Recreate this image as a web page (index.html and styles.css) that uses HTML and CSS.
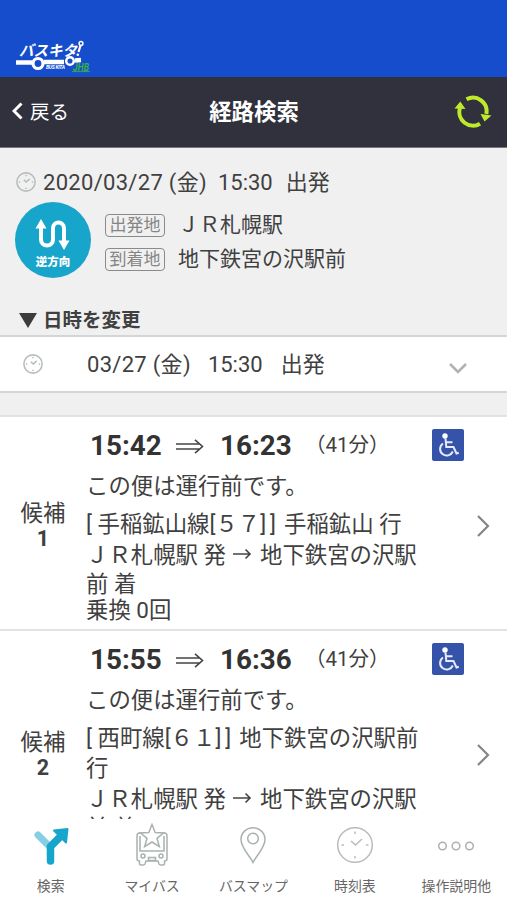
FILE: index.html
```
<!DOCTYPE html>
<html lang="ja">
<head>
    <meta charset="UTF-8">
    <meta name="viewport" content="width=device-width, initial-scale=1.0">
    <title>経路検索</title>
    <link rel="stylesheet" href="styles.css">
</head>
<body>
    <!-- 共通アイコン -->
    <svg class="defs" width="0" height="0">
        <symbol id="clock" viewBox="0 0 38 38">
            <circle cx="19" cy="19" r="17.3"/>
            <path d="M15 15l4.500 4L26 13M19 5.500v2.500M19 30v2.500M5.500 19H8M30 19h2.500"/>
        </symbol>
        <symbol id="wheelchair" viewBox="0 0 32 32">
            <rect width="32" height="32" rx="2" fill="#3553a8"/>
            <circle cx="13" cy="7" r="2.700" fill="#fff"/>
            <path d="M13.500 9.500l.8 8.500h7.200l3 6.500 2.300-.8M14 13.200h6.500M11 14.500a6.600 6.600 0 1 0 9.800 8" fill="none" stroke="#e6eafa" stroke-width="2"/>
        </symbol>
    </svg>

    <div class="app">
        <header class="brand">
            <svg class="logo" width="78" height="36" viewBox="0 0 78 36">
                <path d="M1 22.500H17M29 22H49M60 20.500L66 20" stroke="#fff" stroke-width="4.500" fill="none"/>
                <circle cx="23" cy="23.500" r="5" fill="none" stroke="#fff" stroke-width="3.200"/>
                <circle cx="55" cy="21" r="3.800" fill="none" stroke="#fff" stroke-width="2.500"/>
                <text class="logo-name" x="4" y="15.500" textLength="58" lengthAdjust="spacingAndGlyphs">バスキタ</text>
                <path d="M65.500 5.500L63.500 12" stroke="#fff" stroke-width="2.200"/>
                <circle cx="66" cy="3.500" r="1.900" fill="none" stroke="#fff" stroke-width="1.500"/>
                <circle cx="62.800" cy="14.800" r="1.300" fill="#fff"/>
                <text class="logo-sub" x="31" y="28.500" textLength="19">BUS KITA</text>
                <text class="logo-jhb" x="58" y="31" textLength="16" lengthAdjust="spacingAndGlyphs">JHB</text>
                <path d="M57 31.600H75" stroke="#35a35a"/>
            </svg>
        </header>

        <div class="navbar">
            <a class="back">
                <svg width="11" height="18" viewBox="0 0 11 18"><path d="M9.500 1.500L2 9l7.500 7.500" fill="none" stroke="#fff" stroke-width="3"/></svg>
                <span>戻る</span>
            </a>
            <h1>経路検索</h1>
            <svg class="reload" width="38" height="34" viewBox="0 0 38 34">
                <path d="M12.500 4.300A13.600 13.600 0 0 1 32.300 19M26 28.700A13.600 13.600 0 0 1 6 13" fill="none" stroke="#bfe92b" stroke-width="4"/>
                <path d="M26.500 19L37.500 20.500 30.500 26.500zM.5 13.500L6.300 6.500 11.500 14z" fill="#bfe92b"/>
            </svg>
        </div>

        <section class="summary">
            <div class="when">
                <svg class="clock" width="20" height="20"><use href="#clock"/></svg>
                <p><span class="date">2020/03/27 (金)</span><span class="hour">15:30</span><span>出発</span></p>
            </div>
            <div class="places">
                <div class="reverse">
                    <svg width="36" height="33" viewBox="0 0 36 33"><path d="M6 8V21.500a6 6 0 0 0 12 0V10a5.500 5.500 0 0 1 11 0V24" fill="none" stroke="#fff" stroke-width="4"/><path d="M6 1l5.500 9.500H.5zM29 32l-5.500-9.500h11z" fill="#fff"/></svg>
                    <span>逆方向</span>
                </div>
                <dl>
                    <dt>出発地</dt><dd>ＪＲ札幌駅</dd>
                    <dt>到着地</dt><dd>地下鉄宮の沢駅前</dd>
                </dl>
            </div>
            <h2><i class="triangle"></i>日時を変更</h2>
        </section>

        <div class="picker">
            <svg class="clock" width="20" height="20"><use href="#clock"/></svg>
            <p><span class="date">03/27 (金)</span><span class="hour">15:30</span><span>出発</span></p>
            <svg class="down" width="18" height="11" viewBox="0 0 18 11"><path d="M1 1l8 8 8-8" fill="none" stroke="#aeb2b2" stroke-width="2.500"/></svg>
        </div>

        <main class="results">
            <article class="result">
                <div class="rank">候補<b>1</b></div>
                <div class="route">
                    <div class="times">
                        <b>15:42</b>
                        <svg class="arrow" width="28" height="15" viewBox="0 0 28 15"><path d="M0 5H24M0 10H24M19 .8L26.500 7.500 19 14.200" fill="none" stroke="#444" stroke-width="1.600"/></svg>
                        <b>16:23</b><span class="mins">（41分）</span>
                        <svg class="access" width="32" height="32"><use href="#wheelchair"/></svg>
                    </div>
                    <p class="status">この便は運行前です。</p>
                    <p class="line"><span class="bus">[ 手稲鉱山線[５７<i>]]</i></span>手稲鉱山 行</p>
                    <p class="stops">ＪＲ札幌駅 発 <svg class="to" width="19" height="12" viewBox="0 0 19 12"><path d="M0 6H17M12.500 1.500L17 6l-4.500 4.500" fill="none" stroke="#444" stroke-width="1.600"/></svg> 地下鉄宮の沢駅<br>前 着</p>
                    <p class="change">乗換 0回</p>
                </div>
                <svg class="go" width="13" height="22" viewBox="0 0 13 22"><path d="M1 1l10 10L1 21" fill="none" stroke="#858585" stroke-width="2.200"/></svg>
            </article>

            <article class="result">
                <div class="rank">候補<b>2</b></div>
                <div class="route">
                    <div class="times">
                        <b>15:55</b>
                        <svg class="arrow" width="28" height="15" viewBox="0 0 28 15"><path d="M0 5H24M0 10H24M19 .8L26.500 7.500 19 14.200" fill="none" stroke="#444" stroke-width="1.600"/></svg>
                        <b>16:36</b><span class="mins">（41分）</span>
                        <svg class="access" width="32" height="32"><use href="#wheelchair"/></svg>
                    </div>
                    <p class="status">この便は運行前です。</p>
                    <p class="line"><span class="bus">[ 西町線[６１<i>]]</i></span>地下鉄宮の沢駅前<br>行</p>
                    <p class="stops">ＪＲ札幌駅 発 <svg class="to" width="19" height="12" viewBox="0 0 19 12"><path d="M0 6H17M12.500 1.500L17 6l-4.500 4.500" fill="none" stroke="#444" stroke-width="1.600"/></svg> 地下鉄宮の沢駅<br>前 着</p>
                    <p class="change">乗換 0回</p>
                </div>
                <svg class="go" width="13" height="22" viewBox="0 0 13 22"><path d="M1 1l10 10L1 21" fill="none" stroke="#858585" stroke-width="2.200"/></svg>
            </article>
        </main>

        <nav class="tabs">
            <a>
                <svg width="36" height="44" viewBox="0 0 36 44">
                    <path d="M5 12L17 24" stroke="#86cfe2" stroke-width="7" stroke-linecap="round"/>
                    <path d="M17.500 38V23.500L28 13" fill="none" stroke="#18a5cb" stroke-width="7.500" stroke-linecap="round" stroke-linejoin="round"/>
                    <path d="M21 7.500L34.500 6 33 19.500z" fill="#18a5cb" stroke="#18a5cb" stroke-width="2" stroke-linejoin="round"/>
                </svg>
                <span>検索</span>
            </a>
            <a>
                <svg class="outline" width="36" height="44" viewBox="0 0 36 44">
                    <path d="M8 10H5.500Q3 10 3 13V36q0 2 2.500 2v3q0 1 1.500 1h2.500q1 0 1.500-1l1-3H24l1 3q.5 1 1.500 1H29q1.500 0 1.500-1v-3q2.500 0 2.500-2V13q0-3-2.500-3H28M6 13V28H30V13"/>
                    <path d="M18 1.500l3.200 8 8.300.5-6.500 5.300 2.300 8.300L18 19l-7.300 4.600 2.300-8.300L6.500 10l8.300-.5z" fill="#fff"/>
                    <circle cx="9" cy="33" r="2"/><circle cx="27" cy="33" r="2"/><path d="M14.500 34.500h7v3h-7z"/>
                </svg>
                <span>マイバス</span>
            </a>
            <a>
                <svg class="outline" width="36" height="44" viewBox="0 0 36 44">
                    <path d="M18 39.500C15 33 6 25 6 16.500a12 11.800 0 0 1 24 0C30 25 21 33 18 39.500z"/>
                    <circle cx="18" cy="15.500" r="5.300"/>
                </svg>
                <span>バスマップ</span>
            </a>
            <a>
                <svg class="clock big" width="38" height="44"><use href="#clock"/></svg>
                <span>時刻表</span>
            </a>
            <a>
                <svg class="outline" width="38" height="44" viewBox="0 0 38 44"><circle cx="5.500" cy="23" r="3.800"/><circle cx="19" cy="23" r="3.800"/><circle cx="32.500" cy="23" r="3.800"/></svg>
                <span>操作説明他</span>
            </a>
        </nav>
    </div>
</body>
</html>
```
FILE: styles.css
```
* {
    box-sizing: border-box;
}
body {
    margin: 0;
    font-family: Roboto, "Noto Sans CJK JP", sans-serif;
    font-size: 22.4px;
    color: #404040;
    background: #f0f0f0;
}
h1, h2, p, dl, dd {
    margin: 0;
}
svg {
    display: block;
    flex: none;
}
.defs {
    position: absolute;
}
.app {
    height: 900px;
    display: flex;
    flex-direction: column;
    overflow: hidden;
}

/* ヘッダー */
.brand {
    flex: none;
    height: 77px;
    padding: 40px 0 0 15px;
    background: #164dcc;
}
.logo text {
    fill: #fff;
    font-weight: bold;
    font-style: italic;
}
.logo .logo-name {
    font-size: 15px;
}
.logo .logo-sub {
    font-size: 5px;
}
.logo .logo-jhb {
    font-size: 10px;
    fill: #35b04a;
}
.navbar {
    flex: none;
    height: 71px;
    padding: 0 15px 2px 12px;
    display: grid;
    grid-template-columns: 1fr auto 1fr;
    align-items: center;
    background: #30313d;
    border-bottom: 1px solid #77777d;
    color: #fff;
}
.back {
    display: flex;
    align-items: center;
    gap: 7px;
    font-size: 19.5px;
    line-height: 26px;
}
.back span {
    padding-top: 3px;
}
.navbar h1 {
    padding: 1px 0 0 4px;
    font-size: 22.4px;
    line-height: 30px;
}
.reload {
    justify-self: end;
    margin-top: 2px;
}

/* 検索条件 */
.summary {
    flex: none;
    height: 187px;
    padding: 16px 15px 0;
}
.when {
    display: flex;
    align-items: center;
    height: 36px;
    font-size: 22px;
    line-height: 34px;
}
.when p {
    padding-top: 1px;
}
.clock {
    fill: none;
    stroke: #b7bdbd;
    stroke-width: 3;
}
.when .clock {
    margin: 0 7px 0 1px;
}
.date {
    letter-spacing: 0.3px;
}
.when .hour {
    margin: 0 13px 0 11px;
}
.places {
    display: flex;
    height: 80px;
    padding-top: 2px;
}
.reverse {
    width: 76px;
    height: 76px;
    border-radius: 50%;
    background: #18a5cb;
    color: #fff;
    font-size: 11.5px;
    font-weight: 900;
    line-height: 14px;
    display: flex;
    flex-direction: column;
    align-items: center;
    gap: 4px;
    padding-top: 16px;
}
.places dl {
    margin-left: 14px;
    padding-top: 7px;
    display: grid;
    grid-template-columns: 60px auto;
    grid-auto-rows: 33.5px;
    column-gap: 13px;
    align-items: center;
    font-size: 21px;
    line-height: 33px;
}
.places dt {
    height: 23px;
    border: 1px solid #8a8a8a;
    border-radius: 4px;
    color: #858585;
    font-size: 17px;
    line-height: 20px;
    text-align: center;
}
.summary h2 {
    display: flex;
    align-items: center;
    gap: 6px;
    margin-top: 26px;
    padding-left: 4px;
    font-size: 19.5px;
    line-height: 30px;
}
.triangle {
    margin-bottom: 2px;
    border: 9px solid transparent;
    border-top: 15px solid #3c3c3c;
    border-bottom: 0;
}
.picker {
    flex: none;
    height: 58px;
    padding: 0 40px 0 23px;
    display: flex;
    align-items: center;
    background: #fff;
    border-top: 2px solid #d5d5d5;
    border-bottom: 2px solid #d5d5d5;
    font-size: 22px;
    line-height: 34px;
}
.picker p {
    padding: 1px 0 0 44px;
}
.picker .hour {
    margin: 0 18px 0 17px;
}
.down {
    margin: 8px 0 0 auto;
}

/* 検索結果 */
.results {
    flex: 1;
    min-height: 0;
    overflow: hidden;
    margin-top: 22px;
    background: #fff;
}
.result {
    display: flex;
    align-items: center;
    border-top: 2px solid #e2e2e2;
    padding: 8px 17px 8px 0;
}
.rank {
    width: 86px;
    padding-top: 5px;
    text-align: center;
    line-height: 26px;
}
.rank b {
    display: block;
    font-size: 21.5px;
}
.go {
    margin-top: 5px;
}
.route {
    flex: 1;
    white-space: nowrap;
}
.times {
    display: flex;
    align-items: center;
    height: 40px;
    padding-left: 4px;
}
.times b {
    width: 72px;
    font-size: 27.8px;
    color: #333;
}
.arrow {
    margin: 3px 16px 0 14px;
}
.mins {
    margin: -4px 0 0 13px;
    font-size: 20.5px;
}
.access {
    margin-left: auto;
    margin-right: 13px;
}
.status {
    line-height: 42px;
}
.line {
    padding: 2px 0 1.5px;
    line-height: 30px;
}
.bus {
    margin-right: 4px;
}
.bus i {
    font-style: normal;
    letter-spacing: 4px;
}
.stops {
    line-height: 29px;
}
.to {
    display: inline-block;
    margin: 0 2px;
    vertical-align: 3px;
}
.change {
    line-height: 22.5px;
}

/* 下部タブ */
.tabs {
    flex: none;
    height: 81px;
    display: grid;
    grid-template-columns: repeat(5, 1fr);
    background: #fff;
    color: #666;
    font-size: 13.9px;
}
.tabs a {
    display: flex;
    flex-direction: column;
    align-items: center;
    gap: 9px;
    padding-top: 4px;
    line-height: 20px;
}
.tabs .clock.big {
    stroke-width: 1.5;
}
.outline {
    fill: none;
    stroke: #a9b1b1;
    stroke-width: 1.5;
}
```
